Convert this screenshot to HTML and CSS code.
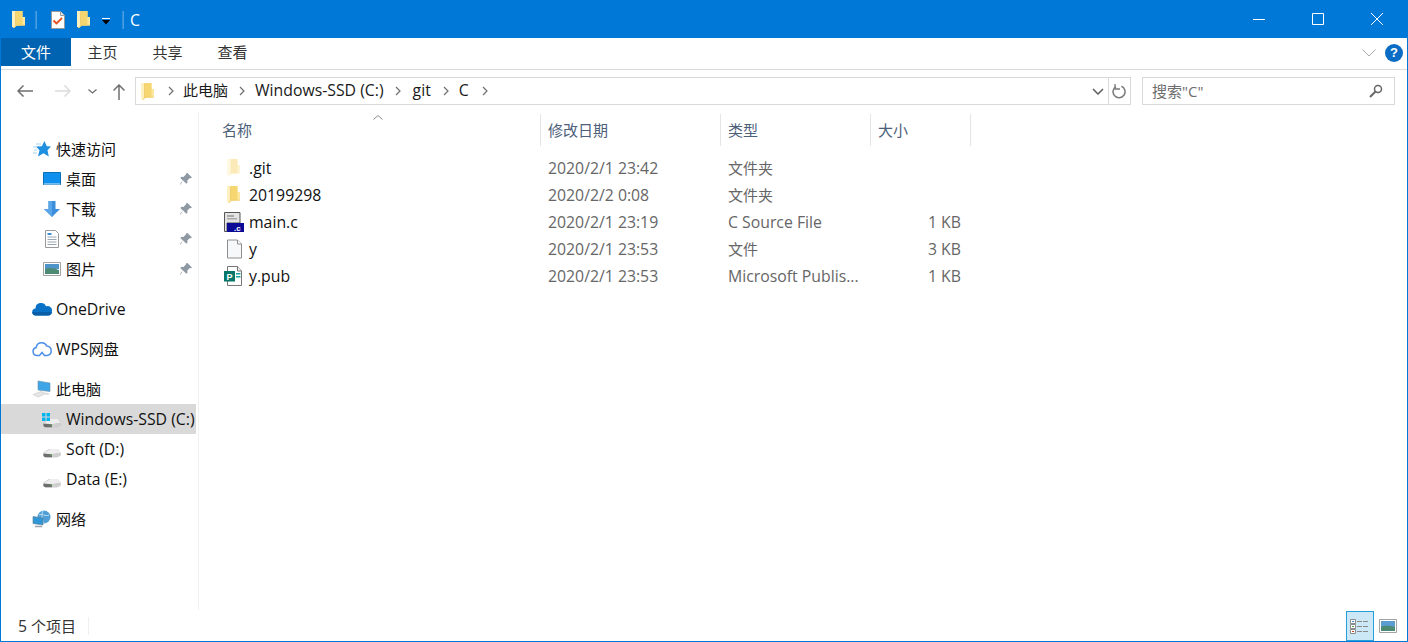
FILE: index.html
```html
<!DOCTYPE html>
<html lang="zh-CN">
<head>
<meta charset="utf-8">
<title>C</title>
<link rel="stylesheet" href="styles.css">
</head>
<body>
<svg class="defs" width="0" height="0" aria-hidden="true">
  <defs>
    <symbol id="folder" viewBox="0 0 13 17">
      <path d="M0 0h10.500v6H13v8.500H5L2 17 0 15.500z" fill="#fbe7a0"/>
      <path d="M3 0h7.500v14.500H3z" fill="#f6d671"/>
      <path d="M0 0h3.500v14.800L2 17 0 15.500z" fill="#fff1bf"/>
      <path d="M3.500 .5v14.300L2 17" fill="none" stroke="#e9c562" stroke-width=".7"/>
      <path d="M4 13.800h9v.7H4z" fill="#eccb6c"/>
    </symbol>
    <symbol id="folder-pale" viewBox="0 0 13 17">
      <path d="M0 0h10.500v6H13v8.500H5L2 17 0 15.500z" fill="#fdf3d2"/>
      <path d="M3 0h7.500v14.500H3z" fill="#fbeab8"/>
      <path d="M0 0h3.500v14.800L2 17 0 15.500z" fill="#fff8e3"/>
    </symbol>
    <symbol id="pin" viewBox="0 0 14 14">
      <path d="M8.400 1L13 5.600l-1.300.6-.8-.3-2.600 2.600.2 2-1.200 1.200L4.100 8.500 1.800 12.200 1 12.900l.8-2.100 2.400-2.100L1.300 5.900l1.200-1.200 2 .2 2.600-2.600-.2-.8z" fill="#8e99a3"/>
    </symbol>
    <symbol id="drive" viewBox="0 0 18 10">
      <path d="M0 5L6 1h9l3 4v3l-4 2H2L0 8.500z" fill="#b9b9b9"/>
      <path d="M0 5.500L7 1h8l3 4-9 1.500z" fill="#eeeeee"/>
      <path d="M0 6l9 .5v3.500H2L0 8.500z" fill="#6d6d6d"/>
      <path d="M9 6.500L18 5v3l-4 2H9z" fill="#cfcfcf"/>
      <path d="M7 7h2v1H7z" fill="#5cc24a"/>
    </symbol>
  </defs>
</svg>

<div class="window">
  <header class="titlebar">
    <div class="qat">
      <svg class="qat-folder"><use href="#folder"/></svg>
      <span class="qat-sep"></span>
      <svg class="qat-check" viewBox="0 0 14 18">
        <path d="M.5.500h9l4 4v13H.5z" fill="#fff" stroke="#9a9a9a"/>
        <path d="M9.500.500v4h4" fill="#e8e8e8" stroke="#9a9a9a"/>
        <path d="M2.500 9.500l3 3 5.500-5.500" fill="none" stroke="#e8501f" stroke-width="1.800"/>
      </svg>
      <svg class="qat-folder qat-folder2"><use href="#folder"/></svg>
      <svg class="qat-drop" viewBox="0 0 8 7">
        <path d="M0 0h8v1H0z" fill="#fff"/>
        <path d="M0 2h8L4 6.500z" fill="#000"/>
      </svg>
      <span class="qat-sep qat-sep2"></span>
      <span class="win-title la">C</span>
    </div>
    <div class="win-controls">
      <span class="win-btn"><svg width="12" height="12" viewBox="0 0 12 12"><path d="M0 6.500h12" stroke="#fff"/></svg></span>
      <span class="win-btn"><svg width="12" height="12" viewBox="0 0 12 12"><path d="M.5.500h11v11H.5z" fill="none" stroke="#fff"/></svg></span>
      <span class="win-btn"><svg width="12" height="12" viewBox="0 0 12 12"><path d="M0 0l12 12M12 0L0 12" stroke="#fff"/></svg></span>
    </div>
  </header>

  <nav class="ribbon">
    <span class="tab tab-file">文件</span>
    <span class="tab">主页</span>
    <span class="tab">共享</span>
    <span class="tab">查看</span>
    <span class="ribbon-space"></span>
    <svg class="ribbon-chev" viewBox="0 0 14 8"><path d="M.5.500L7 7 13.500.500" fill="none" stroke="#a9a9a9"/></svg>
    <span class="help">?</span>
  </nav>

  <div class="addressrow">
    <div class="nav-btns">
      <svg class="nb nb-back" viewBox="0 0 16 12"><path d="M16 6H1M6.500.500L1 6l5.500 5.500" fill="none" stroke="#6f6f6f" stroke-width="1.500"/></svg>
      <svg class="nb nb-fwd" viewBox="0 0 16 12"><path d="M0 6h15M9.500.500L15 6l-5.500 5.500" fill="none" stroke="#dcdcdc" stroke-width="1.500"/></svg>
      <svg class="nb nb-recent" viewBox="0 0 9 5"><path d="M.5.500L4.500 4 8.500.500" fill="none" stroke="#6f6f6f" stroke-width="1.300"/></svg>
      <svg class="nb nb-up" viewBox="0 0 12 16"><path d="M6 16V1M.5 6.500L6 1l5.500 5.500" fill="none" stroke="#6f6f6f" stroke-width="1.500"/></svg>
    </div>
    <div class="addressbox">
      <svg class="crumb-folder"><use href="#folder"/></svg>
      <svg class="crumb-sep crumb-sep-first" viewBox="0 0 6 10"><path d="M1 1l4 4-4 4" fill="none" stroke="#6f6f6f" stroke-width="1.200"/></svg>
      <span class="crumb">此电脑</span>
      <svg class="crumb-sep" viewBox="0 0 6 10"><path d="M1 1l4 4-4 4" fill="none" stroke="#6f6f6f" stroke-width="1.200"/></svg>
      <span class="crumb la">Windows-SSD (C:)</span>
      <svg class="crumb-sep crumb-sep-wide" viewBox="0 0 6 10"><path d="M1 1l4 4-4 4" fill="none" stroke="#6f6f6f" stroke-width="1.200"/></svg>
      <span class="crumb la crumb-git">git</span>
      <svg class="crumb-sep" viewBox="0 0 6 10"><path d="M1 1l4 4-4 4" fill="none" stroke="#6f6f6f" stroke-width="1.200"/></svg>
      <span class="crumb la crumb-c">C</span>
      <svg class="crumb-sep" viewBox="0 0 6 10"><path d="M1 1l4 4-4 4" fill="none" stroke="#6f6f6f" stroke-width="1.200"/></svg>
      <span class="addr-space"></span>
      <span class="addr-drop"><svg width="12" height="7" viewBox="0 0 12 7"><path d="M1 1l5 5 5-5" fill="none" stroke="#5f5f5f" stroke-width="1.500"/></svg></span>
      <span class="addr-refresh"><svg width="15" height="15" viewBox="0 0 15 15"><path d="M9.500 2.300A6 6 0 1 1 4 2.600" fill="none" stroke="#7a7a7a" stroke-width="1.500"/><path d="M3 0v5h5" fill="none" stroke="#7a7a7a" stroke-width="1.300"/></svg></span>
    </div>
    <div class="searchbox">
      <span class="search-text">搜索"C"</span>
      <svg width="14" height="14" viewBox="0 0 14 14"><circle cx="9" cy="5" r="3.500" fill="none" stroke="#666" stroke-width="1.500"/><path d="M6.500 7.500L1 13" stroke="#666" stroke-width="2"/></svg>
    </div>
  </div>

  <div class="main">
    <aside class="sidebar">
      <div class="nav-group">
        <div class="nav-item">
          <svg class="ico" viewBox="0 0 18 18"><path d="M11.500 1l2.300 5.200 4.200.4-3.500 3.600 1.300 6.300-5.300-3.300-5.500 3.300 1.500-6.300-3.500-3.600 5.800-.4z" fill="#1f8fe0"/><path d="M3 4h5M0 7h3M1 10h3M0 13h4" stroke="#a8d2f0"/></svg>
          <span class="zh">快速访问</span>
        </div>
        <div class="nav-item sub">
          <svg class="ico" viewBox="0 0 18 14"><path d="M.5.500h17v12H.5z" fill="#0f8fee" stroke="#0b6fb8"/><path d="M1 11.500h16v1H1z" fill="#d5ecfb"/></svg>
          <span class="nav-label zh">桌面</span>
          <svg class="pin"><use href="#pin"/></svg>
        </div>
        <div class="nav-item sub">
          <svg class="ico" viewBox="0 0 18 18"><path d="M5.500 1h7v8H17l-8 8-8-8h4.500z" fill="#3d8edb"/><path d="M5.500 1h3.500v16L1 9h4.500z" fill="#5ba6e8"/></svg>
          <span class="nav-label zh">下载</span>
          <svg class="pin"><use href="#pin"/></svg>
        </div>
        <div class="nav-item sub">
          <svg class="ico" viewBox="0 0 18 18"><path d="M2.500.500h10l3 3v14h-13z" fill="#fff" stroke="#9a9a9a"/><path d="M4.500 7h9M4.500 9.500h9M4.500 12h9M4.500 14.500h9" stroke="#9aa7b2"/><path d="M4.500 3h4v2h-4z" fill="#3f8fd2"/></svg>
          <span class="nav-label zh">文档</span>
          <svg class="pin"><use href="#pin"/></svg>
        </div>
        <div class="nav-item sub">
          <svg class="ico" viewBox="0 0 18 14"><path d="M.5.500h17v13H.5z" fill="#fff" stroke="#a3a3a3"/><path d="M2 2h14v5H2z" fill="#4f94c9"/><path d="M2 7c4-2 9-1 14 1v4H2z" fill="#4d8a73"/></svg>
          <span class="nav-label zh">图片</span>
          <svg class="pin"><use href="#pin"/></svg>
        </div>
      </div>
      <div class="nav-group">
        <div class="nav-item">
          <svg class="ico ico-wide" viewBox="0 0 20 14"><path d="M4 13.500a3.500 3.500 0 0 1-.5-7A5.500 5.500 0 0 1 14 4.200 4.500 4.500 0 0 1 20 9c0 2.500-1.500 4.500-4 4.500z" fill="#0a72c6"/><path d="M4 13.500a3.500 3.500 0 0 1-3.800-3.500H20c-.300 2-1.500 3.500-4 3.500z" fill="#0a5ea8"/></svg>
          <span class="la">OneDrive</span>
        </div>
      </div>
      <div class="nav-group">
        <div class="nav-item">
          <svg class="ico ico-wide" viewBox="0 0 20 16"><path d="M5 14.500a4 4 0 0 1-.8-7.900A5.500 5.500 0 0 1 14.700 5a4.800 4.800 0 0 1 .6 9.500h-2.800l-2.500-3-2.500 3z" fill="none" stroke="#4d8fe8" stroke-width="1.500"/></svg>
          <span><span class="la">WPS</span>网盘</span>
        </div>
      </div>
      <div class="nav-group">
        <div class="nav-item">
          <svg class="ico ico-wide" viewBox="0 0 20 17"><path d="M6 .5l12 2v8.500L6 9.500z" fill="#3ea6e6" stroke="#6a8ea8" stroke-width=".6"/><path d="M1 14l8-3 5 2-8 3.500z" fill="#e6e6e6" stroke="#bdbdbd" stroke-width=".5"/><path d="M14 12l4 1-2 1.500-3-.8z" fill="#dcdcdc"/></svg>
          <span class="zh">此电脑</span>
        </div>
        <div class="nav-item sub selected">
          <svg class="ico ico-drive" viewBox="0 0 20 18"><use href="#drive" x="1" y="8" width="18" height="9.500"/><path d="M0 3h3.500v3.500H0zM4.500 3H8v3.500H4.500zM0 7.500h3.500V11H0zM4.500 7.500H8V11H4.500z" fill="#00b4f0"/></svg>
          <span class="nav-label la">Windows-SSD (C:)</span>
        </div>
        <div class="nav-item sub">
          <svg class="ico ico-drive" viewBox="0 0 20 18"><use href="#drive" x="1" y="8" width="18" height="9.500"/></svg>
          <span class="nav-label la">Soft (D:)</span>
        </div>
        <div class="nav-item sub">
          <svg class="ico ico-drive" viewBox="0 0 20 18"><use href="#drive" x="1" y="8" width="18" height="9.500"/></svg>
          <span class="nav-label la">Data (E:)</span>
        </div>
      </div>
      <div class="nav-group">
        <div class="nav-item">
          <svg class="ico ico-wide" viewBox="0 0 20 18"><circle cx="12" cy="7" r="6.500" fill="#4f9fd6"/><path d="M7 5c3-2 6 2 10 0M11 1c-2 4-1 8 1 12" fill="none" stroke="#bfe0f2"/><path d="M1 6.500l10 1.500v7L1 13.500z" fill="#2f97d8" stroke="#5f7d91" stroke-width=".6"/><path d="M3 16.500h7" stroke="#9aa3aa" stroke-width="1.500"/></svg>
          <span class="zh">网络</span>
        </div>
      </div>
    </aside>

    <section class="content">
      <div class="list-head">
        <span class="col col-name th">名称<svg class="sort" viewBox="0 0 10 5"><path d="M.5 4.500L5 .5l4.500 4" fill="none" stroke="#8a8a8a"/></svg></span>
        <span class="col col-date th">修改日期</span>
        <span class="col col-type th">类型</span>
        <span class="col col-size th">大小</span>
      </div>
      <div class="list-body">
        <div class="row">
          <span class="col col-name la"><svg class="folder-ico"><use href="#folder-pale"/></svg>.git</span>
          <span class="col col-date la">2020/2/1 23:42</span>
          <span class="col col-type">文件夹</span>
          <span class="col col-size"></span>
        </div>
        <div class="row">
          <span class="col col-name la"><svg class="folder-ico"><use href="#folder"/></svg>20199298</span>
          <span class="col col-date la">2020/2/2 0:08</span>
          <span class="col col-type">文件夹</span>
          <span class="col col-size"></span>
        </div>
        <div class="row">
          <span class="col col-name la"><svg class="file-ico" viewBox="0 0 20 20"><path d="M.5.500h15.500v10.500H3v8.500H.5z" fill="#e4e4e4" stroke="#555"/><path d="M3 3h7v2H3zM3 6h10v1.500H3z" fill="#a9a9a9"/><path d="M3 11h17v9H3z" fill="#0a0a96"/><text x="10" y="18.500" class="c-glyph">.c</text></svg>main.c</span>
          <span class="col col-date la">2020/2/1 23:19</span>
          <span class="col col-type la">C Source File</span>
          <span class="col col-size la">1 KB</span>
        </div>
        <div class="row">
          <span class="col col-name la"><svg class="file-ico" viewBox="0 0 20 20"><path d="M3.500 1h10l4 4v14h-14z" fill="#f7f8f9" stroke="#8e8e8e"/><path d="M13.500 1v4h4" fill="#fff" stroke="#8e8e8e"/></svg>y</span>
          <span class="col col-date la">2020/2/1 23:53</span>
          <span class="col col-type">文件</span>
          <span class="col col-size la">3 KB</span>
        </div>
        <div class="row">
          <span class="col col-name la"><svg class="file-ico" viewBox="0 0 20 20"><path d="M3.500 .5h10l4 4.500v14.500h-14z" fill="#fff" stroke="#777"/><path d="M13.500 .5v4.500h4" fill="#eee" stroke="#777"/><path d="M12 7h4.500v1.500H12zM12 10h4.500v1.500H12z" fill="#18a3a0"/><path d="M0 5h11v10.500H0z" fill="#077568"/><text x="5.500" y="13.500" class="p-glyph">P</text></svg>y.pub</span>
          <span class="col col-date la">2020/2/1 23:53</span>
          <span class="col col-type la">Microsoft Publis...</span>
          <span class="col col-size la">1 KB</span>
        </div>
      </div>
    </section>
  </div>

  <footer class="statusbar">
    <span class="status-text"><span class="la">5</span> 个项目</span>
    <span class="status-sep"></span>
    <span class="status-space"></span>
    <span class="view-btn view-on">
      <svg width="20" height="15" viewBox="0 0 20 15">
        <path d="M.5.500h5v4h-5zM.5 5.500h5v4h-5zM.5 10.500h5v4h-5z" fill="#fff" stroke="#8a8a8a"/>
        <path d="M2 2h2v1H2z" fill="#3a88c8"/><path d="M2 7h2v1H2z" fill="#5aa04a"/><path d="M2 12h2v1H2z" fill="#c8402a"/>
        <path d="M7 2.500h12M7 7.500h12M7 12.500h12" stroke="#8a8a8a" stroke-dasharray="5 1"/>
      </svg>
    </span>
    <span class="view-btn">
      <svg width="18" height="14" viewBox="0 0 18 14">
        <path d="M.5.500h17v13H.5z" fill="#fff" stroke="#a3a3a3"/>
        <path d="M2 2h14v6H2z" fill="#5a9bd0"/><path d="M2 8c4-2 9-1 14 0v4H2z" fill="#4d8a73"/>
      </svg>
    </span>
  </footer>
</div>
</body>
</html>
```
FILE: styles.css
```css
* { box-sizing: border-box; }
html, body { margin: 0; height: 100%; overflow: hidden; }
body {
  font-family: "Open Sans", "Noto Sans CJK SC", sans-serif;
  font-size: 15px;
  color: #1a1a1a;
  background: #fff;
}
.la { font-size: 15.800px; }
.zh { padding-bottom: 2px; }
.defs { position: absolute; }
.window {
  height: 642px;
  display: flex;
  flex-direction: column;
  border: 1px solid #0078d7;
  border-top: 0;
}

/* title bar */
.titlebar {
  height: 38px;
  flex: none;
  margin: 0 -1px;
  background: #0078d7;
  display: flex;
  justify-content: space-between;
}
.qat { display: flex; align-items: center; padding-left: 12px; padding-top: 1px; }
.qat-folder { width: 13px; height: 17px; margin-top: -1px; }
.qat-folder2 { margin-left: 12px; }
.qat-sep { width: 2px; height: 18px; margin-left: 10px; background: #4c9ee0; border-left: 1px solid #2d8fdd; }
.qat-check { width: 14px; height: 18px; margin-left: 14px; }
.qat-drop { width: 8px; height: 7px; margin-left: 12px; margin-top: 4px; }
.qat-sep2 { margin-left: 12px; margin-right: 6px; }
.win-title { color: #fff; }
.win-controls { display: flex; padding-right: 1px; }
.win-btn { width: 59px; display: flex; align-items: center; justify-content: center; padding-right: 1px; }
.win-btn svg { display: block; }

/* ribbon */
.ribbon {
  height: 32px;
  flex: none;
  display: flex;
  align-items: flex-start;
  border-bottom: 1px solid #dadbdc;
  padding-right: 4px;
}
.tab { width: 65px; height: 28px; line-height: 29px; text-align: center; color: #333; }
.tab-file { width: 70px; background: #0063b1; color: #fff; margin-right: -1px; }
.ribbon-space { flex: 1; }
.ribbon-chev { width: 14px; height: 8px; margin-top: 11px; margin-right: 9px; }
.help {
  width: 18px; height: 18px; margin-top: 6px;
  border-radius: 50%;
  background: #0a6cc4;
  color: #fff;
  font: bold 13px/18px "Liberation Sans", sans-serif;
  text-align: center;
}

/* address row */
.addressrow {
  height: 42px;
  flex: none;
  display: flex;
  align-items: flex-start;
  padding-top: 7px;
}
.nav-btns { width: 134px; height: 28px; display: flex; align-items: center; }
.nb { flex: none; display: block; }
.nb-back { width: 16px; height: 12px; margin-left: 16px; }
.nb-fwd { width: 16px; height: 12px; margin-left: 22px; }
.nb-recent { width: 9px; height: 5px; margin-left: 17px; }
.nb-up { width: 12px; height: 16px; margin-left: 16px; margin-top: 2px; }
.addressbox {
  width: 996px; height: 28px;
  border: 1px solid #d9d9d9;
  display: flex;
  align-items: center;
  padding-left: 5px;
}
.crumb-folder { width: 13px; height: 17px; flex: none; }
.crumb-sep { width: 6px; height: 10px; flex: none; margin: 0 10px 0 11px; }
.crumb-sep-first { margin-left: 14px; margin-right: 9px; }
.crumb-sep-wide { margin-right: 12px; }
.crumb { color: #1a1a1a; line-height: 24px; margin-top: -2px; }
.crumb-git { margin-right: 1px; }
.crumb-c { margin-right: 2px; }
.addr-space { flex: 1; }
.addr-drop { width: 21px; height: 26px; display: flex; align-items: center; justify-content: center; border-right: 1px solid #d9d9d9; }
.addr-refresh { width: 21px; height: 26px; display: flex; align-items: center; justify-content: center; }
.searchbox {
  width: 253px; height: 28px; margin-left: 11px;
  border: 1px solid #d9d9d9;
  display: flex;
  align-items: center;
  justify-content: space-between;
  padding: 0 11px 0 9px;
  color: #6d6d6d;
}
.search-text { padding-bottom: 2px; }

/* main */
.main { flex: 1; display: flex; min-height: 0; }
.sidebar {
  width: 198px;
  flex: none;
  border-right: 1px solid #f0f0f0;
  padding-top: 22px;
  padding-right: 2px;
  margin-bottom: 1px;
}
.nav-group { margin-bottom: 10px; }
.nav-item { height: 30px; display: flex; align-items: center; padding-left: 31px; color: #111; white-space: nowrap; }
.nav-item.sub { padding-left: 41px; }
.nav-item.selected { background: #d9d9d9; }
.ico { width: 18px; height: 18px; flex: none; margin-left: 1px; margin-right: 5px; }
.ico-wide { width: 20px; height: 18px; margin-left: 0; margin-right: 4px; }
.ico-drive { width: 20px; margin-left: 0; margin-right: 4px; }
.nav-label { flex: 1; }
.pin { width: 14px; height: 14px; margin-right: 3px; flex: none; }

/* file list */
.content { flex: 1; padding-top: 2px; min-width: 0; }
.list-head { display: flex; height: 32px; align-items: stretch; margin-left: 23px; margin-bottom: 8px; }
.list-body { margin-left: 23px; }
.row { display: flex; height: 27px; align-items: center; }
.col { display: flex; align-items: center; white-space: nowrap; color: #666; }
.col-name { width: 319px; color: #111; }
.col-date { width: 180px; padding-left: 7px; }
.col-type { width: 150px; padding-left: 7px; }
.col-size { width: 100px; padding-left: 7px; justify-content: flex-end; padding-right: 10px; }
.th { color: #4c607a; border-right: 1px solid #e5e5e5; padding-bottom: 2px; }
.th.col-name { position: relative; }
.th.col-size { justify-content: flex-start; padding-right: 0; }
.sort { position: absolute; left: 151px; top: 1px; width: 10px; height: 5px; }
.file-ico { width: 20px; height: 20px; flex: none; margin-left: 2px; margin-right: 5px; }
.folder-ico { width: 13px; height: 17px; flex: none; margin-left: 5px; margin-right: 9px; }
.c-glyph { font: bold 8px "Liberation Sans", sans-serif; fill: #fff; }
.p-glyph { font: bold 9px "Liberation Sans", sans-serif; fill: #fff; text-anchor: middle; }

/* status */
.statusbar {
  height: 30px;
  flex: none;
  display: flex;
  align-items: stretch;
  padding-left: 17px;
  padding-right: 5px;
  color: #333;
}
.status-text { line-height: 31px; }
.status-sep { width: 1px; background: #f0f0f0; margin: 6px 0 6px 12px; }
.status-space { flex: 1; }
.view-btn { width: 28px; display: flex; align-items: center; justify-content: center; }
.view-on { background: #cce8f6; border: 1px solid #26a0da; }
```
